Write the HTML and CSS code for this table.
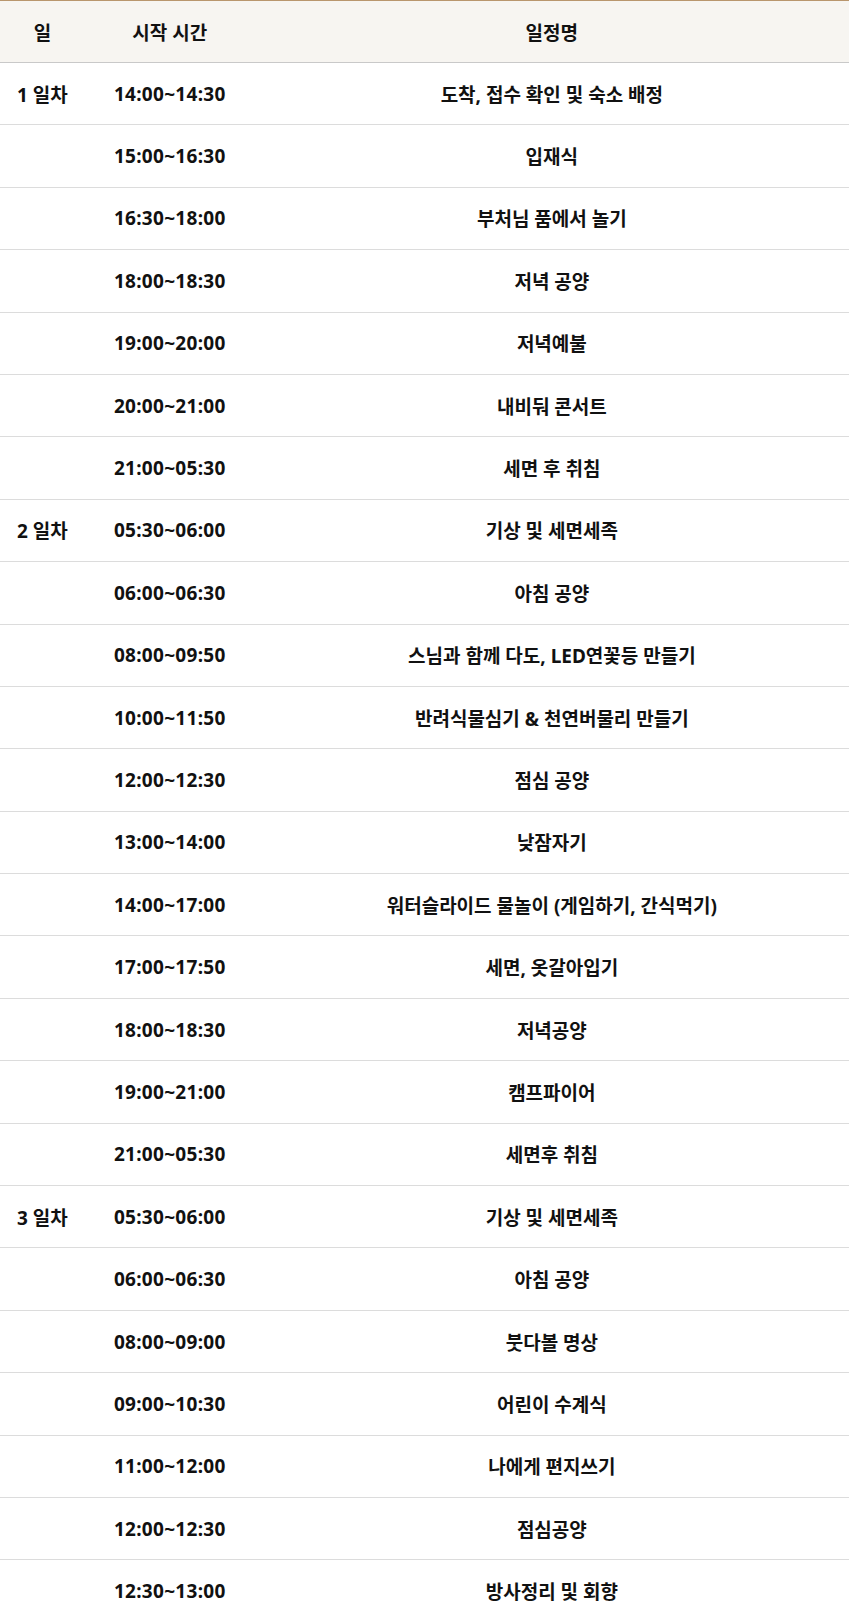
FILE: index.html
```html
<!DOCTYPE html>
<html lang="ko">
<head>
<meta charset="utf-8">
<link rel="stylesheet" href="styles.css">
</head>
<body>
<table class="schedule">
  <colgroup>
    <col class="c-day"><col class="c-time"><col class="c-name">
  </colgroup>
  <thead>
    <tr><th>일</th><th>시작 시간</th><th>일정명</th></tr>
  </thead>
  <tbody>
    <tr><td>1 일차</td><td class="time">14:00~14:30</td><td>도착, 접수 확인 및 숙소 배정</td></tr>
    <tr><td></td><td class="time">15:00~16:30</td><td>입재식</td></tr>
    <tr><td></td><td class="time">16:30~18:00</td><td>부처님 품에서 놀기</td></tr>
    <tr><td></td><td class="time">18:00~18:30</td><td>저녁 공양</td></tr>
    <tr><td></td><td class="time">19:00~20:00</td><td>저녁예불</td></tr>
    <tr><td></td><td class="time">20:00~21:00</td><td>내비둬 콘서트</td></tr>
    <tr><td></td><td class="time">21:00~05:30</td><td>세면 후 취침</td></tr>
    <tr><td>2 일차</td><td class="time">05:30~06:00</td><td>기상 및 세면세족</td></tr>
    <tr><td></td><td class="time">06:00~06:30</td><td>아침 공양</td></tr>
    <tr><td></td><td class="time">08:00~09:50</td><td>스님과 함께 다도, LED연꽃등 만들기</td></tr>
    <tr><td></td><td class="time">10:00~11:50</td><td>반려식물심기 &amp; 천연버물리 만들기</td></tr>
    <tr><td></td><td class="time">12:00~12:30</td><td>점심 공양</td></tr>
    <tr><td></td><td class="time">13:00~14:00</td><td>낮잠자기</td></tr>
    <tr><td></td><td class="time">14:00~17:00</td><td>워터슬라이드 물놀이 (게임하기, 간식먹기)</td></tr>
    <tr><td></td><td class="time">17:00~17:50</td><td>세면, 옷갈아입기</td></tr>
    <tr><td></td><td class="time">18:00~18:30</td><td>저녁공양</td></tr>
    <tr><td></td><td class="time">19:00~21:00</td><td>캠프파이어</td></tr>
    <tr><td></td><td class="time">21:00~05:30</td><td>세면후 취침</td></tr>
    <tr><td>3 일차</td><td class="time">05:30~06:00</td><td>기상 및 세면세족</td></tr>
    <tr><td></td><td class="time">06:00~06:30</td><td>아침 공양</td></tr>
    <tr><td></td><td class="time">08:00~09:00</td><td>붓다볼 명상</td></tr>
    <tr><td></td><td class="time">09:00~10:30</td><td>어린이 수계식</td></tr>
    <tr><td></td><td class="time">11:00~12:00</td><td>나에게 편지쓰기</td></tr>
    <tr><td></td><td class="time">12:00~12:30</td><td>점심공양</td></tr>
    <tr><td></td><td class="time">12:30~13:00</td><td>방사정리 및 회향</td></tr>
  </tbody>
</table>
</body>
</html>
```

FILE: styles.css
```css
html, body {
  margin: 0;
  padding: 0;
  background: #ffffff;
}

.schedule {
  width: 100%;
  border-collapse: collapse;
  table-layout: fixed;
  border-top: 1px solid #b9966d;
  font-family: "Noto Sans", "Noto Sans CJK KR", sans-serif;
  font-weight: 700;
  font-size: 19px;
  color: #111111;
}

.c-day { width: 10%; }
.c-time { width: 20%; }
.c-name { width: 70%; }

.schedule th {
  background: #f7f5f1;
  height: 61px;
  padding: 0;
  font-weight: 700;
  text-align: center;
  border-bottom: 1px solid #c9c9c9;
}

.schedule td {
  height: 61.4px;
  padding: 0;
  text-align: center;
  border-bottom: 1px solid #dcdcdc;
}

.schedule td.time {
  letter-spacing: 0.3px;
}

.schedule tbody tr:last-child td {
  border-bottom: none;
}
```
